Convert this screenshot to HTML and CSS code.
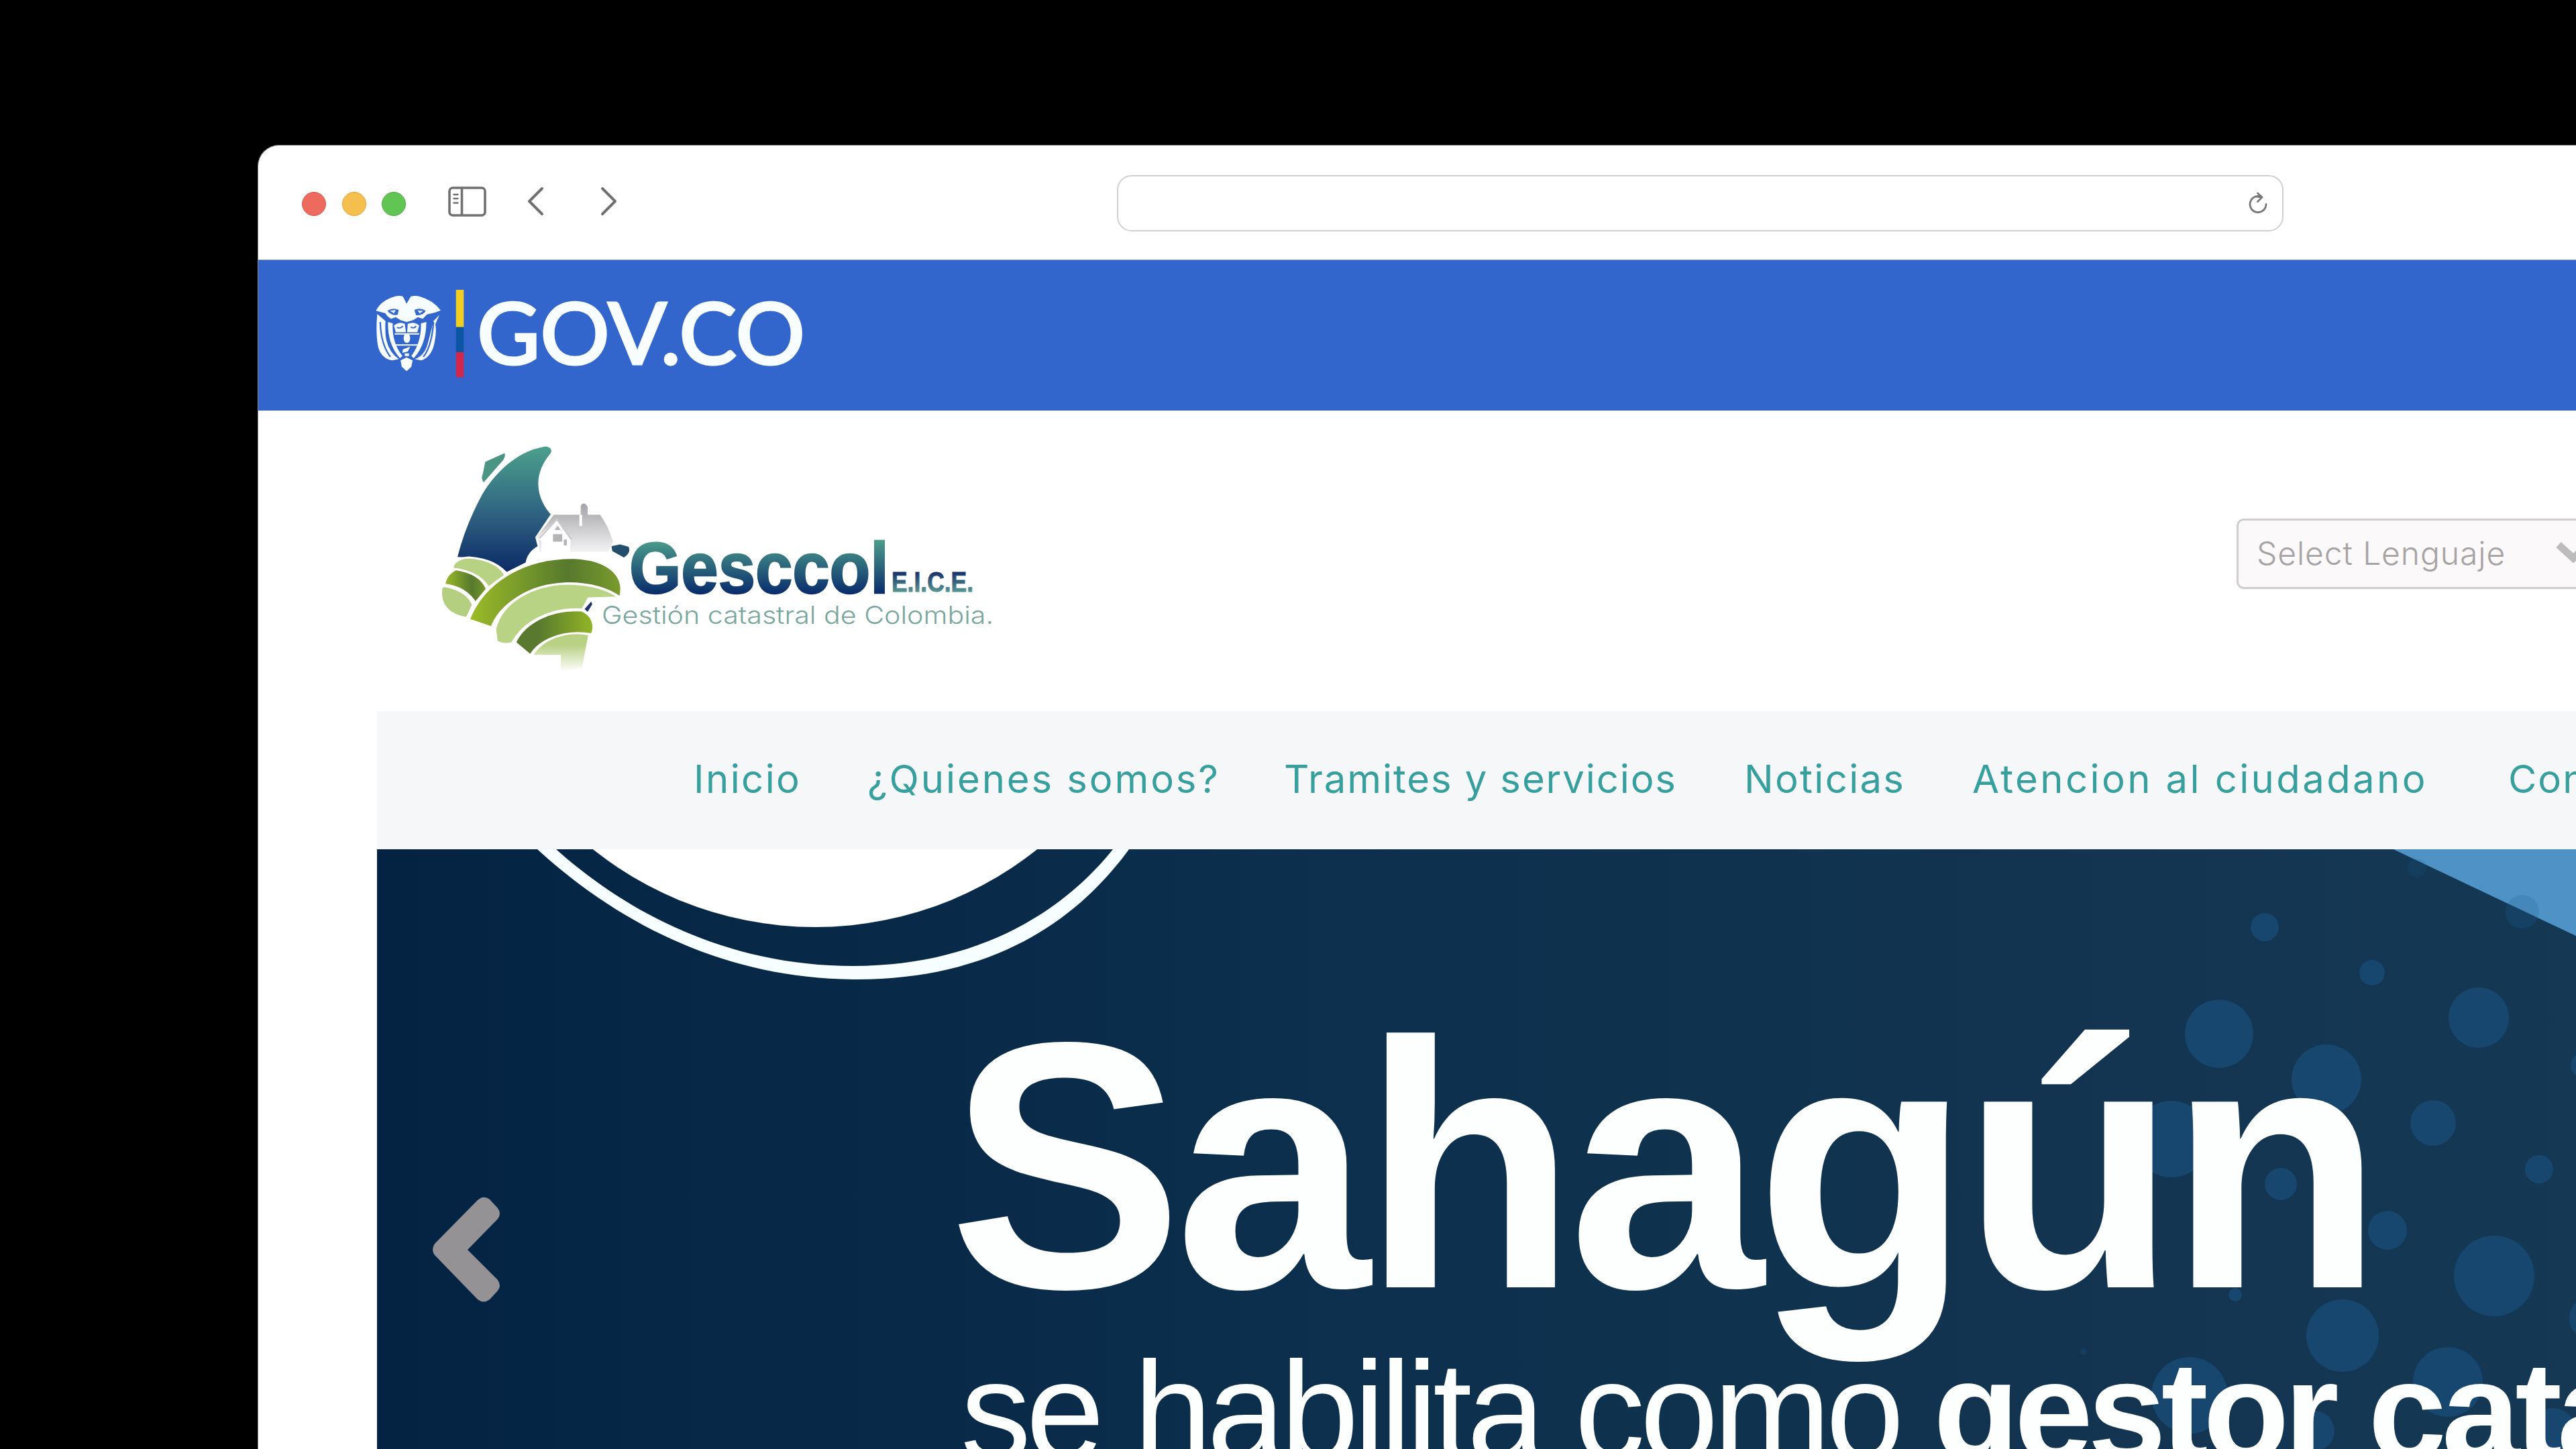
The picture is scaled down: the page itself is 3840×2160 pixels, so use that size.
FILE: index.html
```html
<!DOCTYPE html>
<html lang="es">
<head>
<meta charset="utf-8">
<title>Gesccol E.I.C.E.</title>
<link rel="stylesheet" href="styles.css">
</head>
<body>
<main class="window">
  <header class="toolbar">
    <div class="lights"><i class="light red"></i><i class="light amber"></i><i class="light green"></i></div>
    <svg class="sidebar-icon" viewBox="0 0 58 46" fill="none" stroke="#707070" stroke-width="3.6">
      <rect x="2" y="2" width="53" height="41" rx="5"/><path d="M20.5 2v41"/>
      <path d="M8.500 12h6M8.500 18h6M8.500 24.500h6" stroke-width="2.400" stroke-linecap="round"/>
    </svg>
    <svg class="nav-icon back" viewBox="0 0 26 44" fill="none" stroke="#707070" stroke-width="4" stroke-linecap="round" stroke-linejoin="round"><path d="M22 3 3 22 22 41"/></svg>
    <svg class="nav-icon forward" viewBox="0 0 26 44" fill="none" stroke="#707070" stroke-width="4" stroke-linecap="round" stroke-linejoin="round"><path d="M4 3 23 22 4 41"/></svg>
    <div class="address">
      <svg class="reload" viewBox="0 0 30 36" fill="none" stroke="#777" stroke-width="2.800" stroke-linecap="round" stroke-linejoin="round">
        <path d="M26 19.500A12 12 0 1 1 19.500 8.800L13 8.400M13.500 3 20 9 13.500 15.500"/>
      </svg>
    </div>
  </header>

  <section class="gov">
    <svg class="gov-logo" viewBox="0 0 700 200">
      <g transform="scale(.4464 .3333)">
        <g fill="#f7fdff">
          <path d="M148 158 136 126Q124 120 108 126 60 146 46 190L76 200Q84 216 96 226L112 218 128 232 148 240 170 232 186 218 202 226 216 206 242 198 262 188Q236 142 192 126 176 120 162 126Z"/>
          <path d="M50 204Q44 300 54 356 66 404 100 412L122 406Q84 370 78 300 76 250 78 236Z"/>
          <path d="M258 208 238 236Q226 300 218 340 208 390 176 406L196 412Q226 400 238 350 250 290 244 250Z"/>
          <path d="M86 240Q84 340 126 402L134 392Q98 330 102 246Z"/>
          <path d="M214 240Q214 340 172 402L164 392Q198 330 196 246Z"/>
          <path d="M148 398 168 412 164 440 148 460 132 440 128 412Z"/>
          <path d="M106 256Q124 236 142 248L146 286H112ZM152 248Q174 236 190 256L184 286H150Z"/>
          <ellipse cx="149" cy="312" rx="11" ry="22"/>
          <path d="M108 290H190V296H108ZM112 340H186V346H112ZM136 362 160 350 152 372 134 378ZM142 380H156V392H142Z"/>
        </g>
        <g fill="#3467ce">
          <path d="M84 190Q102 174 122 186L118 208Q98 214 84 190ZM174 186Q194 174 212 190 204 212 180 210Z"/>
        </g>
        <g fill="none" stroke="#3467ce" stroke-width="5">
          <path d="M116 264Q126 272 136 258M162 262Q172 272 180 258M60 240Q62 340 94 396M238 240Q232 350 204 396"/>
        </g>
        <path d="M92 190 112 186 106 202ZM184 188 204 190 192 202Z" fill="#dfeaff"/>
        <path d="M313 96h26v167h-26z" fill="#f0ce24"/><path d="M313 263h26v112h-26z" fill="#0b55a2"/><path d="M313 375h26v112h-26z" fill="#d3264c"/>
      </g>
      <text class="gov-text" x="171" y="143" textLength="489" lengthAdjust="spacingAndGlyphs">GOV.CO</text>
    </svg>
  </section>

  <section class="brand">
    <svg class="brand-logo" viewBox="0 0 900 380">
      <defs>
        <linearGradient id="sky" x1="0" y1="0" x2="0" y2="1"><stop offset="0" stop-color="#4ba08c"/><stop offset=".5" stop-color="#326783"/><stop offset="1" stop-color="#0c2a66"/></linearGradient>
        <linearGradient id="word" x1="0" y1="0" x2="0" y2="1"><stop offset=".15" stop-color="#4c9d8c"/><stop offset=".8" stop-color="#0b2f6c"/></linearGradient>
        <linearGradient id="small" x1="0" y1="0" x2="0" y2="1"><stop offset=".2" stop-color="#16306a"/><stop offset=".85" stop-color="#5a9c96"/></linearGradient>
        <linearGradient id="roof" x1="0" y1="0" x2="0" y2="1"><stop offset="0" stop-color="#a3a2a6"/><stop offset="1" stop-color="#f3f3f5"/></linearGradient>
        <linearGradient id="hill" x1="0" y1="0" x2="1" y2="0"><stop offset="0" stop-color="#9dbd28"/><stop offset=".65" stop-color="#56792d"/><stop offset="1" stop-color="#7c9c2c"/></linearGradient>
        <linearGradient id="hill2" x1="0" y1="0" x2="1" y2="0"><stop offset=".3" stop-color="#597a2e"/><stop offset="1" stop-color="#94b626"/></linearGradient>
        <linearGradient id="fade" x1="0" y1="0" x2="0" y2="1"><stop offset=".3" stop-color="#b9d183"/><stop offset="1" stop-color="#fff"/></linearGradient>
      </defs>
      <g transform="scale(.574 .3351)">
        <path d="M180 145 230 106Q234 118 226 138L176 236Q168 220 174 196Z" fill="#4a9583"/>
        <path d="M108 568Q128 430 172 290C210 180 270 92 338 76Q356 82 350 106C308 190 306 290 350 378L310 480 316 520Q290 545 285 592L236 634Q200 570 108 568Z" fill="url(#sky)"/>
        <path d="M358 380H428V340Q436 318 446 345V380H478Q500 430 512 500L500 545H320V500L312 485Z" fill="url(#roof)"/>
        <path d="M312 488 366 398 402 480 400 548H326V496Z" fill="#fff"/><path d="M366 400 320 486M366 400 404 490" stroke="#c8c8cc" stroke-width="5"/>
        <path d="M360 448 368 428 376 448ZM356 466H380V500H356ZM384 490H392V516H384Z" fill="#b5b4b8"/>
        <path d="M428 380V430" stroke="#fff" stroke-width="7"/>
        <path d="M508 520 530 512 552 522Q560 548 540 570L510 542Z" fill="#234f6d"/>
        <g stroke="#fff" stroke-width="9">
          <path d="M94 608Q104 572 138 570 210 580 234 648L188 706Q160 634 94 620Z" fill="#b7d282"/>
          <path d="M104 622Q170 640 186 710L154 776Q130 702 72 690Q76 644 104 622Z" fill="url(#hill)"/>
          <path d="M72 696Q134 714 150 780L134 840Q56 820 64 706Z" fill="#b5cf80"/>
          <path d="M136 846C172 690 270 570 410 572 500 578 548 650 532 750Q470 680 390 686C290 700 220 780 198 882Z" fill="url(#hill)"/>
          <path d="M204 890C220 770 300 690 392 686 456 688 500 710 528 748L450 752 434 802C350 790 280 860 252 950Q230 962 208 944Z" fill="#b8d383"/>
          <path d="M256 948C280 860 350 796 432 806 464 830 468 880 458 912 380 890 320 940 298 1008Z" fill="url(#hill2)"/>
          <path d="M302 1006C330 930 390 894 450 914L434 1060Q400 1080 374 1078V1006Z" fill="url(#fade)" stroke-width="5"/>
        </g>
        <path d="M455 766 438 800 446 812 458 778Z" fill="#22346f"/>
      </g>
      <text class="word" x="318" y="244" textLength="387" lengthAdjust="spacingAndGlyphs" fill="url(#word)" stroke="url(#word)">Gesccol</text>
      <text class="eice" x="709" y="242" textLength="122" lengthAdjust="spacingAndGlyphs" fill="url(#small)" stroke="url(#small)">E.I.C.E.</text>
      <text class="tagline" x="277" y="290" textLength="584" lengthAdjust="spacingAndGlyphs">Gestión catastral de Colombia.</text>
    </svg>
    <div class="select"><span>Select Lenguaje</span>
      <svg class="caret" viewBox="0 0 52 34" fill="none" stroke="#bdbcbd" stroke-width="11"><path d="M4 5 26 25 48 5"/></svg>
    </div>
  </section>

  <div class="content">
    <nav class="menu">
      <a class="m1">Inicio</a><a class="m2">¿Quienes somos?</a><a class="m3">Tramites y servicios</a><a class="m4">Noticias</a><a class="m5">Atencion al ciudadano</a><a class="m6">Contacto</a>
    </nav>
    <section class="hero">
      <svg class="hero-art" viewBox="562 1266 3278 894">
        <ellipse cx="1215" cy="855" rx="529" ry="527" fill="#fff"/>
        <path d="M801 1266C920 1375 1080 1460 1278 1460 1470 1460 1600 1380 1683 1266H1659C1580 1365 1450 1440 1272 1440 1090 1440 940 1365 829 1266Z" fill="#f7feff"/>
        <path d="M3568 1266H3840V1395Z" fill="#4f93c6"/>
        <g fill="#17466f">
          <circle cx="3308" cy="1541" r="51"/><circle cx="3468" cy="1609" r="52"/><circle cx="3695" cy="1517" r="45"/>
          <circle cx="3536" cy="1450" r="19"/><circle cx="3376" cy="1382" r="21"/><circle cx="3627" cy="1674" r="34"/>
          <circle cx="3559" cy="1834" r="29"/><circle cx="3785" cy="1743" r="21"/><circle cx="3400" cy="1765" r="24"/>
          <circle cx="3718" cy="1902" r="60"/><circle cx="3492" cy="1991" r="54"/><circle cx="3649" cy="2060" r="52"/>
          <circle cx="3264" cy="2080" r="57"/><circle cx="3237" cy="1698" r="57"/><circle cx="3332" cy="1930" r="10"/>
          <circle cx="3106" cy="2015" r="5" opacity=".5"/><circle cx="3450" cy="2133" r="30"/><circle cx="3850" cy="1588" r="18"/>
          <circle cx="3862" cy="1965" r="32"/><circle cx="3805" cy="2135" r="36"/>
          <circle cx="3603" cy="1294" r="14" opacity=".4"/><circle cx="3760" cy="1359" r="25" opacity=".6"/>
        </g>
        <path d="M3568 1266H3840V1395Z" fill="#4f93c6" opacity=".75"/>
      </svg>
      <svg class="prev" viewBox="0 0 100 158"><path d="M67 5Q76-3 85 4L97 17Q103 25 97 33L52 79 97 124Q103 133 97 140L85 153Q76 160 67 153L3 87Q-3 79 3 70Z" fill="#949294"/></svg>
      <div class="caption">
        <h1>Sahagún</h1>
        <p>se habilita como <b>gestor catastral</b></p>
      </div>
    </section>
  </div>
</main>
</body>
</html>
```
FILE: styles.css
```css
* { box-sizing: border-box; }
html, body { margin: 0; width: 3840px; height: 2160px; overflow: hidden; background: #000; }
body { padding: 216px 0 0 384px; font-family: Inter, "Liberation Sans", sans-serif; }
svg { display: block; flex: none; }
.window { height: 1944px; overflow: hidden; background: #fff; border: 1px solid #8b8b8b; border-width: 1px 0 0 1px; border-radius: 32px 0 0 0; }
.toolbar { height: 171px; display: flex; align-items: flex-start; padding-left: 65px; border-bottom: 1px solid #7b8ca8; }
.lights { display: flex; gap: 23.600px; padding-top: 69px; }
.light { width: 36px; height: 36px; border-radius: 50%; border: 1px solid; }
.red { background: #ed6a5f; border-color: #d9564c; }
.amber { background: #f5bf50; border-color: #dba53d; }
.green { background: #61c554; border-color: #50a945; }
.sidebar-icon { width: 58px; height: 46px; margin: 61px 0 0 63px; }
.nav-icon { width: 26px; height: 44px; margin-top: 61px; }
.back { margin-left: 60px; }
.forward { margin-left: 82px; }
.address { flex: none; width: 1739px; height: 84px; margin: 44px 0 0 745px; border: 2px solid #d0d0d0; border-radius: 22px; display: flex; justify-content: flex-end; padding: 22px 20px 0 0; }
.reload { width: 30px; height: 36px; }
.gov { height: 224px; background: #3366cc; padding: 12px 0 0 155px; }
.gov-logo { width: 700px; height: 200px; }
.gov-text { font: 500 128px Lato, sans-serif; fill: #f8fdff; stroke: #f8fdff; stroke-width: 3px; }
.brand { height: 448px; display: flex; padding: 28px 0 0 235px; }
.brand-logo { width: 900px; height: 380px; }
.word { font: 700 107px "Liberation Sans", sans-serif; stroke-width: 2.500px; }
.eice { font: 700 43px "Liberation Sans", sans-serif; stroke-width: 1px; }
.tagline { font: 300 37px Inter, sans-serif; fill: #7aa79d; }
.select { flex: none; width: 507px; height: 105px; margin: 133px 0 0 1814px; border: 3px solid #cfcdcf; border-right: 0; border-radius: 11px 0 0 11px; background: #fbf9fa; display: flex; align-items: center; padding: 0 0 3px 27px; color: #a6a3a5; font-size: 48px; font-weight: 300; overflow: hidden; }
.select span { flex: none; width: 446px; white-space: nowrap; letter-spacing: .9px; }
.caret { width: 52px; height: 34px; }
.content { margin-left: 177px; }
.menu { height: 206px; padding: 0 0 4px 472px; background: #f5f7f9; display: flex; align-items: center; color: #379f9d; font-size: 58px; white-space: nowrap; overflow: hidden; }
.menu a { flex: none; }
.m1 { width: 259px; letter-spacing: 2.400px; }
.m2 { width: 621px; letter-spacing: 2.900px; }
.m3 { width: 686px; letter-spacing: 1.900px; }
.m4 { width: 340px; letter-spacing: 2.300px; }
.m5 { width: 799px; letter-spacing: 3.400px; }
.m6 { letter-spacing: 2px; }
.hero { position: relative; height: 894px; padding: 232px 0 0 847px; overflow: hidden; background: linear-gradient(90deg, #042343 0, #0c304d 1500px, #123451 2500px, #153854 3278px); }
.hero-art { position: absolute; left: 0; top: 0; width: 3278px; height: 894px; }
.prev { position: absolute; left: 83px; top: 518px; width: 100px; height: 158px; }
.caption { position: relative; color: #fdffff; font-family: "Liberation Sans", Arial, sans-serif; white-space: nowrap; }
.caption h1 { margin: 0 0 0 5px; font-size: 524px; line-height: 480px; letter-spacing: -12.300px; }
.caption p { margin: 26px 0 0 23px; font-size: 210px; line-height: 200px; letter-spacing: -7.400px; }
```
